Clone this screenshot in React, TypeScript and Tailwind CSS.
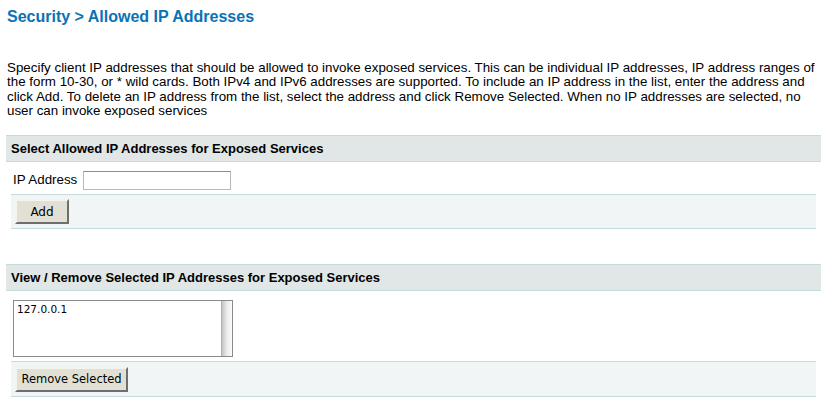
export default function App() {
  return (
    <div className="min-h-[404px] bg-white font-['Liberation_Sans',Arial,sans-serif] text-black">
      <h1 className="pl-[7px] pt-[7px] text-[16px] font-bold leading-[20px] text-[#0a72b5]">
        Security &gt; Allowed IP Addresses
      </h1>

      <p className="mt-[34px] whitespace-nowrap pl-[7px] text-[13.35px] leading-[14.3px]">
        Specify client IP addresses that should be allowed to invoke exposed services. This can be individual IP addresses, IP address ranges of
        <br />
        the form 10-30, or * wild cards. Both IPv4 and IPv6 addresses are supported. To include an IP address in the list, enter the address and
        <br />
        click Add. To delete an IP address from the list, select the address and click Remove Selected. When no IP addresses are selected, no
        <br />
        user can invoke exposed services
      </p>

      <section className="ml-[6px] mr-[2px] mt-[17px]">
        <div className="flex h-[27px] items-center border-y border-[#c6dcdc] bg-[#e1e6e6] pl-[5px] text-[13px] font-bold">
          Select Allowed IP Addresses for Exposed Services
        </div>
        <div className="flex h-[32px] items-center gap-[6px] pl-[7px] pt-[4px] text-[13.35px]">
          <span>IP Address</span>
          <input className="h-[19px] w-[148px] border border-[#b8b8b8] border-t-[#8c8c8c] bg-white px-1 text-[12px] outline-none" />
        </div>
        <div className="mx-[5px] flex h-[35px] items-center border-y border-[#c6dcdc] bg-[#f2f5f5] pl-[4px]">
          <button className="h-[25px] w-[54px] border-2 border-[#f4f4ee] border-b-[#6e6e6e] border-r-[#6e6e6e] bg-[#e2e0d5] font-['DejaVu_Sans',sans-serif] text-[12px]">
            Add
          </button>
        </div>
      </section>

      <section className="ml-[6px] mr-[2px] mt-[35px]">
        <div className="flex h-[27px] items-center border-y border-[#c6dcdc] bg-[#e1e6e6] pl-[5px] text-[13px] font-bold">
          View / Remove Selected IP Addresses for Exposed Services
        </div>
        <div className="pb-[4px] pl-[7px] pt-[9px]">
          <div className="flex h-[57px] w-[220px] border border-[#8a8a8a] bg-white">
            <div className="flex-1 pl-[3px] pt-[1px] font-['DejaVu_Sans',sans-serif] text-[10.5px] leading-[14px]">127.0.0.1</div>
            <div className="w-[11px] border-l border-[#b0b0b0] bg-gradient-to-r from-[#c4c4c4] via-[#ececec] to-[#fbfbfb]" />
          </div>
        </div>
        <div className="mx-[5px] flex h-[36px] items-center border-y border-[#c6dcdc] bg-[#f2f5f5] pl-[4px]">
          <button className="h-[25px] w-[113px] border-2 border-[#f4f4ee] border-b-[#6e6e6e] border-r-[#6e6e6e] bg-[#e2e0d5] font-['DejaVu_Sans',sans-serif] text-[11.5px]">
            Remove Selected
          </button>
        </div>
      </section>
    </div>
  )
}
